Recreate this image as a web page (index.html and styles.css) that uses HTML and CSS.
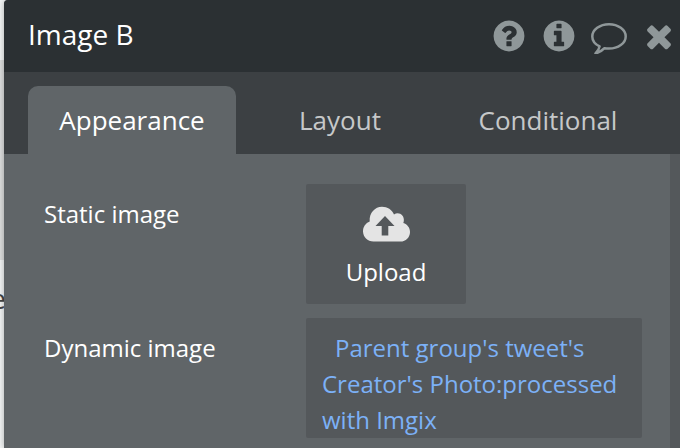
FILE: index.html
```html
<!DOCTYPE html>
<html lang="en">
<head>
  <meta charset="UTF-8">
  <title>Image B</title>
  <link rel="stylesheet" href="styles.css">
</head>
<body>
  <div class="canvas">
    <div class="canvas-block"></div>
    <div class="canvas-text">e</div>
  </div>

  <section class="editor">
    <header class="title-bar">
      <h1>Image B</h1>
      <div class="actions">
        <button type="button" aria-label="Help">
          <svg viewBox="0 0 1792 1792"><path d="M1024 1376v-192q0-14-9-23t-23-9h-192q-14 0-23 9t-9 23v192q0 14 9 23t23 9h192q14 0 23-9t9-23zm256-672q0-88-55.500-163t-138.500-116-170-41q-243 0-371 213-15 24 8 42l132 100q7 6 19 6 16 0 25-12 53-68 86-92 34-24 86-24 48 0 85.500 26t37.500 59q0 38-20 61t-68 45q-63 28-115.500 86.500t-52.500 125.500v36q0 14 9 23t23 9h192q14 0 23-9t9-23q0-19 21.500-49.500t54.500-49.500q32-18 49-28.500t46-35 44.500-48 28-60.500 12.500-81zm384 192q0 209-103 385.500t-279.500 279.500-385.500 103-385.500-103-279.500-279.500-103-385.500 103-385.500 279.500-279.500 385.500-103 385.500 103 279.500 279.500 103 385.500z"/></svg>
        </button>
        <button type="button" aria-label="Info">
          <svg viewBox="0 0 1792 1792"><path d="M1152 1376v-160q0-14-9-23t-23-9h-96v-512q0-14-9-23t-23-9h-320q-14 0-23 9t-9 23v160q0 14 9 23t23 9h96v320h-96q-14 0-23 9t-9 23v160q0 14 9 23t23 9h448q14 0 23-9t9-23zm-128-896v-160q0-14-9-23t-23-9h-192q-14 0-23 9t-9 23v160q0 14 9 23t23 9h192q14 0 23-9t9-23zm640 416q0 209-103 385.500t-279.500 279.500-385.500 103-385.500-103-279.500-279.500-103-385.500 103-385.500 279.500-279.500 385.500-103 385.500 103 279.500 279.500 103 385.500z"/></svg>
        </button>
        <button type="button" aria-label="Comment">
          <svg viewBox="0 0 36 36"><path class="line" d="M18 6.200C8.800 6.200 1.300 11.700 1.300 18.400c0 4.200 2.900 7.800 7.300 10-.5 2.800-2 5-4.100 7 3.700-1 6.600-2.600 9-5.200 1.400.3 2.900.4 4.500.4 9.200 0 16.700-5.500 16.700-12.200S27.200 6.200 18 6.200z"/></svg>
        </button>
        <button type="button" aria-label="Close">
          <svg viewBox="0 0 1792 1792"><path d="M1490 1322q0 40-28 68l-136 136q-28 28-68 28t-68-28l-294-294-294 294q-28 28-68 28t-68-28l-136-136q-28-28-28-68t28-68l294-294-294-294q-28-28-28-68t28-68l136-136q28-28 68-28t68 28l294 294 294-294q28-28 68-28t68 28l136 136q28 28 28 68t-28 68l-294 294 294 294q28 28 28 68z"/></svg>
        </button>
      </div>
    </header>

    <nav class="tabs">
      <button type="button" class="tab active">Appearance</button>
      <button type="button" class="tab">Layout</button>
      <button type="button" class="tab">Conditional</button>
    </nav>

    <div class="properties">
      <div class="row">
        <label for="staticImage">Static image</label>
        <button type="button" id="staticImage" class="upload">
          <svg viewBox="0 0 48 36"><path fill-rule="evenodd" d="M11.500 35.500C5.500 35.500 1 31 1 25.200c0-4.500 2.600-8.100 6.700-9.800C7 7 13 .700 20 .700c5.500 0 10 3 12 7.700 4.500-3.300 10.700.4 9.800 6.600-.1.800-.2 1.300-.5 1.900 4 1.300 6.700 4.700 6.700 9 0 5.400-4.200 9.600-9.500 9.600zM23 10l-9.500 10h6.200v9.500h6.600V20h6.200z"/></svg>
          <span>Upload</span>
        </button>
      </div>
      <div class="row">
        <label for="dynamicImage">Dynamic image</label>
        <textarea id="dynamicImage" rows="3" spellcheck="false">Parent group's tweet's Creator's Photo:processed with Imgix</textarea>
      </div>
    </div>
  </section>
</body>
</html>
```

FILE: styles.css
```css
* {
  box-sizing: border-box;
}

body {
  margin: 0;
  min-height: 100vh;
  display: grid;
  grid-template-columns: 4px 1fr;
  background: #f2f4f4;
  font-family: "Open Sans", sans-serif;
  font-size: 24px;
  color: #fff;
}

button, textarea {
  font: inherit;
  color: inherit;
  border: 0;
  padding: 0;
}

button {
  cursor: pointer;
}

/* page being edited, behind the panel */
.canvas {
  overflow: hidden;
  padding-top: 60px;
}

.canvas-block {
  height: 200px;
  background: #dcdddd;
}

.canvas-text {
  display: flex;
  justify-content: flex-end;
  width: 6px;
  padding-top: 20px;
  font-size: 28px;
  line-height: 36px;
  color: #444;
}

.editor {
  position: relative;
  display: flex;
  flex-direction: column;
  background: #606568;
  border-top-left-radius: 4px;
  box-shadow: 0 0 6px rgba(0, 0, 0, 0.3);
}

.title-bar {
  display: flex;
  align-items: center;
  justify-content: space-between;
  height: 72px;
  padding: 0 3px 0 24px;
  background: #2b3033;
  border-top-left-radius: 4px;
}

.title-bar h1 {
  margin: 0;
  padding-bottom: 4px;
  font-size: 28px;
  font-weight: 400;
}

.actions {
  display: flex;
  gap: 14px;
}

.actions button {
  background: none;
}

.actions svg {
  display: block;
  width: 36px;
  height: 36px;
  fill: #8f9799;
}

.actions .line {
  fill: none;
  stroke: #8f9799;
  stroke-width: 2.5;
  stroke-linejoin: round;
}

.tabs {
  display: grid;
  grid-template-columns: repeat(3, 1fr);
  padding: 14px 28px 0 24px;
  background: #3c4043;
}

.tab {
  height: 68px;
  background: none;
  border-radius: 10px 10px 0 0;
  font-size: 26px;
  color: #c6c8c9;
}

.tab.active {
  background: #606568;
  color: #fff;
}

.properties {
  flex: 1;
  display: flex;
  flex-direction: column;
  gap: 14px;
  padding: 30px 28px 10px 40px;
  border-right: 10px solid #54585b;
}

.row {
  display: grid;
  grid-template-columns: 262px 1fr;
  align-items: start;
}

.row label {
  padding-top: 12px;
  line-height: 36px;
}

.upload {
  display: flex;
  flex-direction: column;
  align-items: center;
  justify-content: center;
  gap: 12px;
  width: 160px;
  height: 120px;
  padding-top: 8px;
  background: #54585b;
  border-radius: 2px;
}

.upload svg {
  width: 48px;
  height: 36px;
  fill: #e4e4e4;
}

.upload span {
  line-height: 36px;
}

.row textarea {
  display: block;
  width: 100%;
  height: 120px;
  padding: 12px 16px 0;
  overflow: hidden;
  resize: none;
  background: #54585b;
  border-radius: 2px;
  line-height: 36px;
  text-indent: 13px;
  color: #7cb1f7;
}
```
